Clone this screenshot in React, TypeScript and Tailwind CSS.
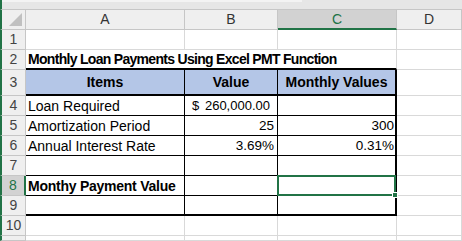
import React from 'react';

const cols = ['A', 'B', 'C', 'D'];
const grid = 'border-r border-b border-[#d9d9d9]';

type Cell = {
  text?: string;
  cls?: string;
  content?: React.ReactNode;
};

const Corner = () => (
  <div className="h-[20px] bg-[#efefef] border-r border-b border-[#c6c6c6] border-l-2 border-l-[#217346] flex items-end justify-end pr-[3px] pb-[3px]">
    <svg width="13" height="13" viewBox="0 0 13 13">
      <polygon points="13,0 13,13 0,13" fill="#c0c0c0" />
    </svg>
  </div>
);

const RowHead = ({ n, h, active }: { n: number | string; h: string; active?: boolean }) => (
  <div
    className={
      active
        ? `${h} bg-[#d2d2d2] border-b border-[#c6c6c6] border-r-2 border-r-[#217346] border-l-2 border-l-[#217346] text-[#217346] flex items-center justify-center`
        : `${h} bg-[#efefef] border-r border-b border-[#c6c6c6] border-l-2 border-l-[#217346] text-[#444] flex items-center justify-center`
    }
  >
    {n}
  </div>
);

const rows: { n: number | string; h: string; cells: Cell[] }[] = [
  { n: 1, h: 'h-[20px]', cells: [{ cls: grid }, { cls: grid }, { cls: grid }, { cls: grid }] },
  {
    n: 2,
    h: 'h-[20px]',
    cells: [
      {
        cls: 'border-b-2 border-black overflow-visible',
        content: (
          <span className="font-bold whitespace-nowrap pl-[2px] tracking-[-0.7px] relative z-10">
            Monthly Loan Payments Using Excel PMT Function
          </span>
        ),
      },
      { cls: 'border-b-2 border-black' },
      { cls: 'border-b-2 border-black border-r border-r-[#d9d9d9]' },
      { cls: grid },
    ],
  },
  {
    n: 3,
    h: 'h-[26px]',
    cells: [
      { cls: 'bg-[#b4c6e7] border-b-2 border-r border-black justify-center font-bold', text: 'Items' },
      { cls: 'bg-[#b4c6e7] border-b-2 border-r border-black justify-center font-bold', text: 'Value' },
      { cls: 'bg-[#b4c6e7] border-b-2 border-r-2 border-black justify-center font-bold', text: 'Monthly Values' },
      { cls: grid },
    ],
  },
  {
    n: 4,
    h: 'h-[20px]',
    cells: [
      { cls: 'border-b border-r border-black pl-[2px]', text: 'Loan Required' },
      {
        cls: 'border-b border-r border-black pl-[7px] pr-[7px] text-[13px]',
        content: (
          <>
            <span>$</span>
            <span className="ml-auto">260,000.00</span>
          </>
        ),
      },
      { cls: 'border-b border-r-2 border-black' },
      { cls: grid },
    ],
  },
  {
    n: 5,
    h: 'h-[20px]',
    cells: [
      { cls: 'border-b border-r border-black pl-[2px]', text: 'Amortization Period' },
      { cls: 'border-b border-r border-black justify-end pr-[3px] text-[13.5px]', text: '25' },
      { cls: 'border-b border-r-2 border-black justify-end pr-[1px] text-[13.5px]', text: '300' },
      { cls: grid },
    ],
  },
  {
    n: 6,
    h: 'h-[20px]',
    cells: [
      { cls: 'border-b border-r border-black pl-[2px]', text: 'Annual Interest Rate' },
      { cls: 'border-b border-r border-black justify-end pr-[3px] text-[13.5px]', text: '3.69%' },
      { cls: 'border-b border-r-2 border-black justify-end pr-[1px] text-[13.5px]', text: '0.31%' },
      { cls: grid },
    ],
  },
  {
    n: 7,
    h: 'h-[20px]',
    cells: [
      { cls: 'border-b border-r border-black' },
      { cls: 'border-b border-r border-black' },
      { cls: 'border-b border-r-2 border-black' },
      { cls: grid },
    ],
  },
  {
    n: 8,
    h: 'h-[20px]',
    cells: [
      {
        cls: 'border-b border-r border-black pl-[2px]',
        content: <span className="font-bold tracking-[-0.25px]">Monthy Payment Value</span>,
      },
      { cls: 'border-b border-r border-black' },
      {
        cls: 'border-b border-r-2 border-black relative overflow-visible',
        content: (
          <div className="absolute -left-[1px] -top-[1px] -right-[1px] -bottom-[1px] border-2 border-[#217346] z-20">
            <div className="absolute -right-[4px] -bottom-[4px] w-[6px] h-[6px] bg-[#217346] border border-white" />
          </div>
        ),
      },
      { cls: grid },
    ],
  },
  {
    n: 9,
    h: 'h-[20px]',
    cells: [
      { cls: 'border-b-2 border-r border-black' },
      { cls: 'border-b-2 border-r border-black' },
      { cls: 'border-b-2 border-r-2 border-black' },
      { cls: grid },
    ],
  },
  { n: 10, h: 'h-[20px]', cells: [{ cls: grid }, { cls: grid }, { cls: grid }, { cls: grid }] },
  { n: '', h: 'h-[5px]', cells: [{ cls: grid }, { cls: grid }, { cls: grid }, { cls: grid }] },
];

export default function App() {
  return (
    <div
      className="w-[462px] h-[241px] overflow-hidden bg-white text-[14px] text-black"
      style={{ fontFamily: '"Liberation Sans", Arial, sans-serif' }}
    >
      {/* ribbon edge */}
      <div className="h-[10px] bg-[#e6e6e6] border-l-2 border-l-[#217346] border-b border-b-[#c6c6c6]">
        <div className="h-[2px] w-[300px] bg-[#f3f3f3]" />
      </div>

      <div className="grid grid-cols-[26px_159px_93px_119px_65px]">
        <Corner />
        {cols.map((c) => (
          <div
            key={c}
            className={
              c === 'C'
                ? 'h-[20px] bg-[#d2d2d2] border-r border-[#c6c6c6] border-b-2 border-b-[#217346] text-[#217346] flex items-center justify-center'
                : 'h-[20px] bg-[#efefef] border-r border-b border-[#c6c6c6] text-[#333] flex items-center justify-center'
            }
          >
            {c}
          </div>
        ))}

        {rows.map((r, i) => (
          <React.Fragment key={i}>
            <RowHead n={r.n} h={r.h} active={r.n === 8} />
            {r.cells.map((c, j) => (
              <div key={j} className={`${r.h} flex items-center leading-none ${c.cls ?? ''}`}>
                {c.content ?? c.text}
              </div>
            ))}
          </React.Fragment>
        ))}
      </div>
    </div>
  );
}
